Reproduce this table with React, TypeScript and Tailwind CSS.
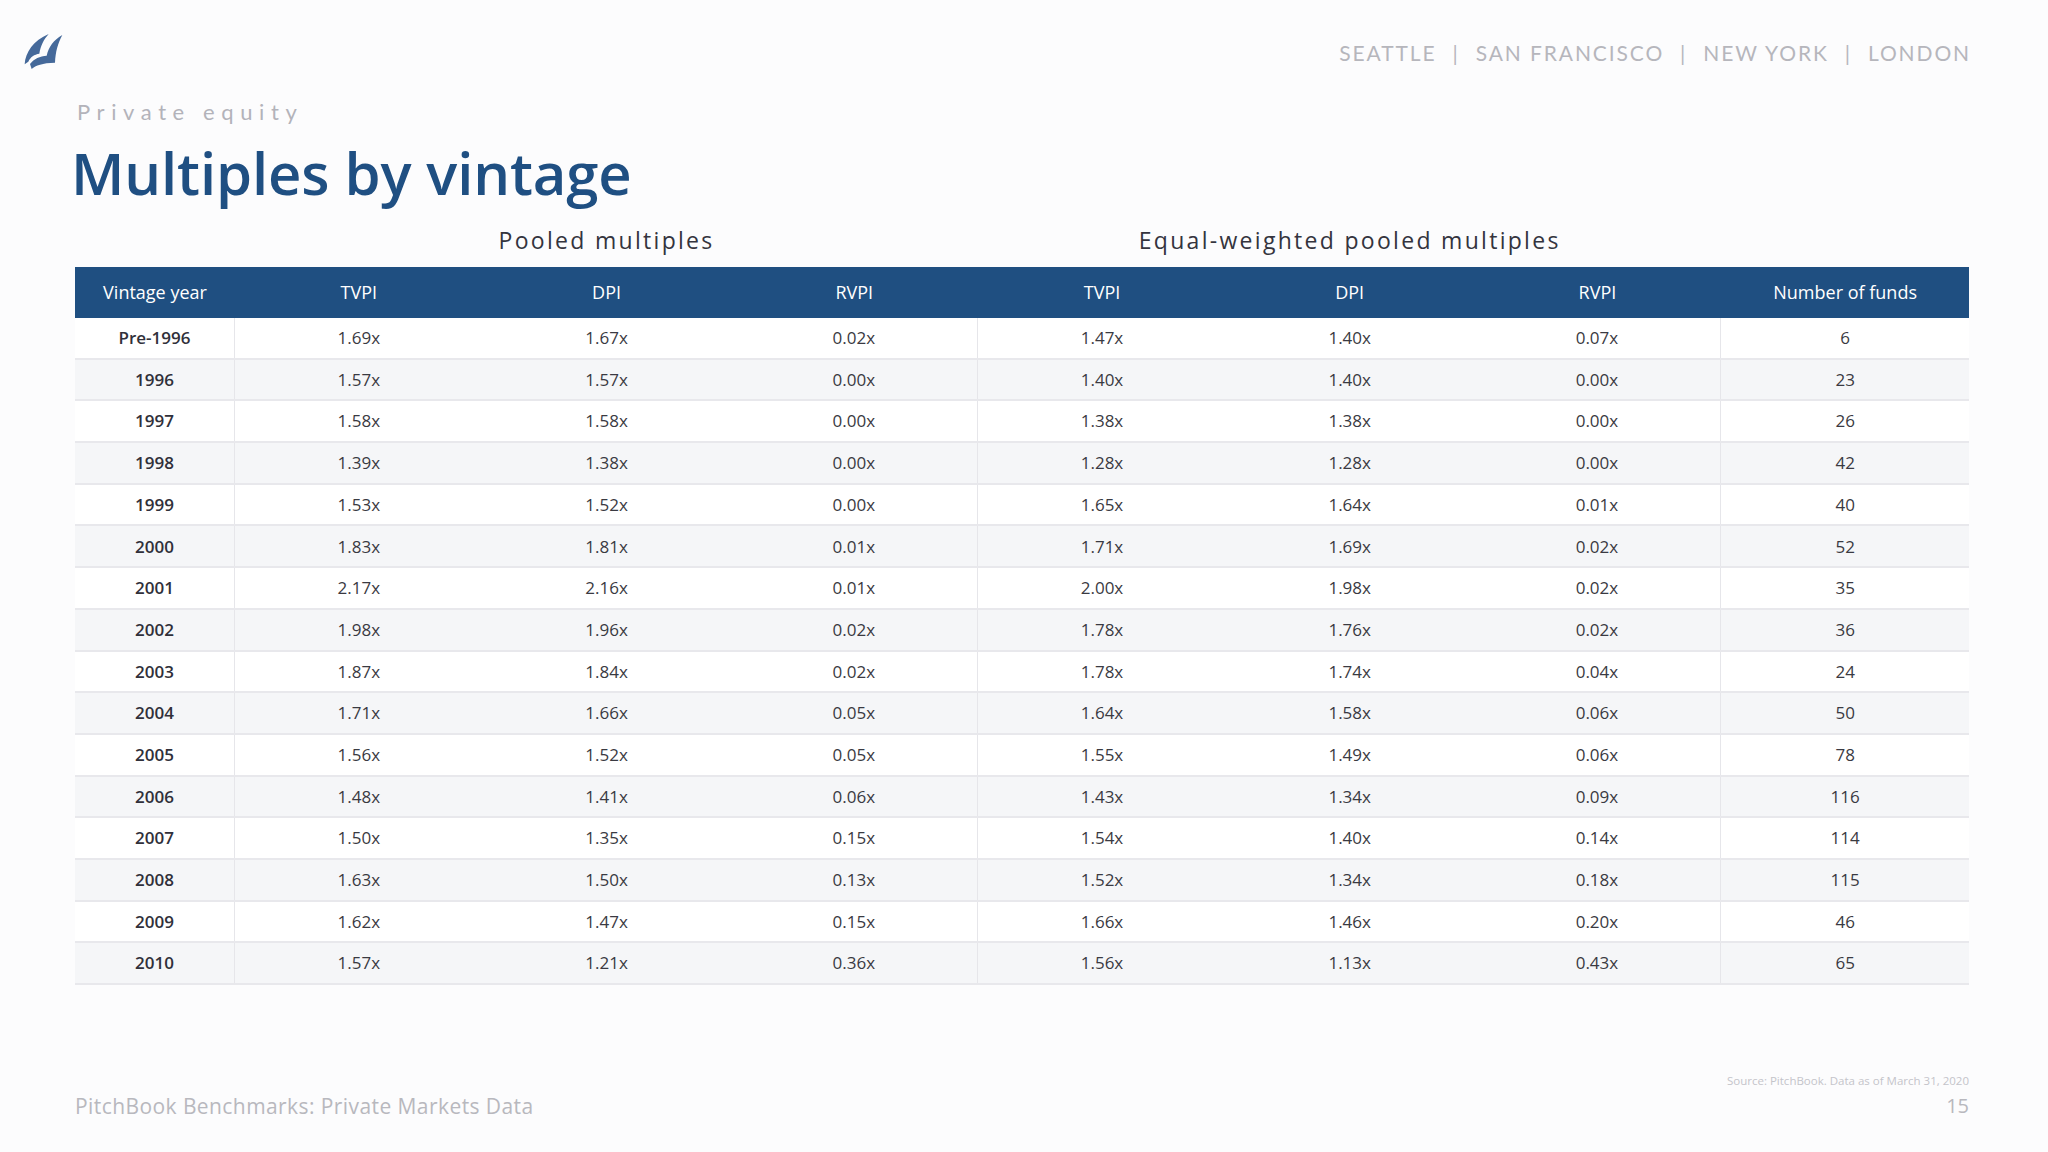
import React from "react";

const rows: [string, string, string, string, string, string, string, string][] = [
  ["Pre-1996", "1.69x", "1.67x", "0.02x", "1.47x", "1.40x", "0.07x", "6"],
  ["1996", "1.57x", "1.57x", "0.00x", "1.40x", "1.40x", "0.00x", "23"],
  ["1997", "1.58x", "1.58x", "0.00x", "1.38x", "1.38x", "0.00x", "26"],
  ["1998", "1.39x", "1.38x", "0.00x", "1.28x", "1.28x", "0.00x", "42"],
  ["1999", "1.53x", "1.52x", "0.00x", "1.65x", "1.64x", "0.01x", "40"],
  ["2000", "1.83x", "1.81x", "0.01x", "1.71x", "1.69x", "0.02x", "52"],
  ["2001", "2.17x", "2.16x", "0.01x", "2.00x", "1.98x", "0.02x", "35"],
  ["2002", "1.98x", "1.96x", "0.02x", "1.78x", "1.76x", "0.02x", "36"],
  ["2003", "1.87x", "1.84x", "0.02x", "1.78x", "1.74x", "0.04x", "24"],
  ["2004", "1.71x", "1.66x", "0.05x", "1.64x", "1.58x", "0.06x", "50"],
  ["2005", "1.56x", "1.52x", "0.05x", "1.55x", "1.49x", "0.06x", "78"],
  ["2006", "1.48x", "1.41x", "0.06x", "1.43x", "1.34x", "0.09x", "116"],
  ["2007", "1.50x", "1.35x", "0.15x", "1.54x", "1.40x", "0.14x", "114"],
  ["2008", "1.63x", "1.50x", "0.13x", "1.52x", "1.34x", "0.18x", "115"],
  ["2009", "1.62x", "1.47x", "0.15x", "1.66x", "1.46x", "0.20x", "46"],
  ["2010", "1.57x", "1.21x", "0.36x", "1.56x", "1.13x", "0.43x", "65"],
];

const headers = ["Vintage year", "TVPI", "DPI", "RVPI", "TVPI", "DPI", "RVPI", "Number of funds"];

function Logo() {
  return (
    <svg width="55" height="55" viewBox="0 0 165 165" className="block">
      <path
        d="M29 118 C31 82 55 46 101 27 C86 44 77 62 73 86 C58 88 46 96 40 110 L29 118 Z"
        fill="#45699a"
      />
      <path
        d="M142 30 C115 46 101 66 95 92 C75 93 57 101 45 117 L50 132 C62 121 82 114 120 113 C122 80 128 56 142 30 Z"
        fill="#45699a"
      />
    </svg>
  );
}

const OS = { fontFamily: "'Open Sans', 'Noto Sans', sans-serif" };
const LATO = { fontFamily: "Lato, 'Open Sans', sans-serif" };

export default function App() {
  return (
    <div className="w-[2048px] h-[1152px] bg-[#fcfcfd] flex flex-col overflow-hidden" style={OS}>
      {/* top bar */}
      <div className="flex justify-between items-start pl-[15px] pr-[77px] pt-[25px] h-[98px]">
        <Logo />
        <div
          className="mt-[16px] text-[21px] leading-[24px] tracking-[0.09em] text-[#b6b6bc] flex items-center gap-[16px]"
          style={LATO}
        >
          <span>SEATTLE</span>
          <span>|</span>
          <span>SAN FRANCISCO</span>
          <span>|</span>
          <span>NEW YORK</span>
          <span>|</span>
          <span>LONDON</span>
        </div>
      </div>

      <div className="pl-[77px] text-[22px] leading-[28px] tracking-[0.3em] text-[#b3b3ba]" style={LATO}>
        Private equity
      </div>

      <div className="pl-[71px] mt-[17px] text-[58px] leading-[60px] font-semibold text-[#1f4f82] tracking-[-0.002em]">
        Multiples by vintage
      </div>

      {/* group titles */}
      <div className="ml-[75px] mr-[79px] mt-[19px] grid grid-cols-[160px_repeat(7,minmax(0,1fr))] h-[36px] items-center text-[23px] tracking-[0.1em] text-[#34343e] font-medium">
        <div />
        <div className="col-span-3 text-center">Pooled multiples</div>
        <div className="col-span-3 text-center">Equal-weighted pooled multiples</div>
        <div />
      </div>

      {/* table */}
      <div className="ml-[75px] mr-[79px] mt-[9px]">
        <div className="grid grid-cols-[160px_repeat(7,minmax(0,1fr))] h-[51px] bg-[#1f4f81] items-center text-white text-[18px] font-medium">
          {headers.map((h, i) => (
            <div key={i} className="text-center">
              {h}
            </div>
          ))}
        </div>
        {rows.map((r, ri) => (
          <div
            key={ri}
            className={
              "grid grid-cols-[160px_repeat(7,minmax(0,1fr))] h-[41.7px] border-b-2 border-[#e8e8ec] text-[17px] text-[#3a3a42] " +
              (ri % 2 === 0 ? "bg-white" : "bg-[#f5f6f8]")
            }
          >
            {r.map((c, ci) => (
              <div
                key={ci}
                className={
                  "flex items-center justify-center " +
                  (ci === 0 ? "font-semibold text-[#30303a] " : "") +
                  (ci === 0 || ci === 3 || ci === 6 ? "border-r border-[#e6e6ea]" : "")
                }
              >
                {c}
              </div>
            ))}
          </div>
        ))}
      </div>

      <div className="flex-1" />

      {/* footer */}
      <div className="flex justify-between items-end pl-[75px] pr-[79px] pb-[34px]">
        <div className="text-[21px] leading-[24px] tracking-[0.02em] text-[#b8b8be]">
          PitchBook Benchmarks: Private Markets Data
        </div>
        <div className="flex flex-col items-end">
          <div className="text-[11.5px] leading-[12px] text-[#c4c4ca] mb-[7px]">
            Source: PitchBook. Data as of March 31, 2020
          </div>
          <div className="text-[20px] leading-[24px] text-[#b8b8be]">15</div>
        </div>
      </div>
    </div>
  );
}
